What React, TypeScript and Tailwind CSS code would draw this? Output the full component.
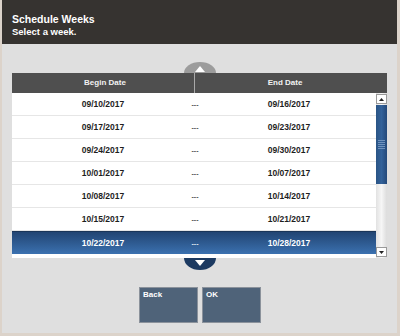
import React from 'react';

const weeks = [
  { begin: '09/10/2017', end: '09/16/2017' },
  { begin: '09/17/2017', end: '09/23/2017' },
  { begin: '09/24/2017', end: '09/30/2017' },
  { begin: '10/01/2017', end: '10/07/2017' },
  { begin: '10/08/2017', end: '10/14/2017' },
  { begin: '10/15/2017', end: '10/21/2017' },
  { begin: '10/22/2017', end: '10/28/2017' },
];

export default function App() {
  const selected = 6;

  return (
    <div
      className="w-[400px] h-[336px] flex flex-col bg-[#dfdfdf] border-l-2 border-r-[3px] border-b-[3px] border-[#dcd3ca] overflow-hidden"
      style={{ fontFamily: '"Liberation Sans", Arial, sans-serif' }}
    >
      {/* Header */}
      <div className="h-[44px] shrink-0 bg-[#363330] pl-[10px] pt-[14px] text-white font-bold leading-none">
        <div className="text-[10.5px]">Schedule Weeks</div>
        <div className="text-[9.5px] mt-[2px]">Select a week.</div>
      </div>

      {/* Table area */}
      <div className="flex flex-col items-center pt-[18px] pl-[10px] pr-[10px]">
        {/* Up tab */}
        <div className="w-[32px] h-[11px] rounded-t-[16px_11px] bg-[#9c9c9c] flex items-end justify-center pb-[1px]">
          <svg width="10" height="6" viewBox="0 0 10 6">
            <polygon points="5,0 10,6 0,6" fill="#ffffff" />
          </svg>
        </div>

        <div className="w-[375px] flex flex-col">
          {/* Column headers */}
          <div className="h-[20px] bg-[#4f4f4f] flex text-[#f2f2f2] font-bold text-[8px] leading-none">
            <div className="w-[182px] flex items-center justify-center pl-[4px]">Begin Date</div>
            <div className="w-px bg-[#a9a9a9]" />
            <div className="flex-1 flex items-center justify-center pr-[12px]">End Date</div>
          </div>

          {/* Body */}
          <div className="h-[165px] flex bg-white">
            <div className="w-[364px] flex flex-col">
              {weeks.map((w, i) => {
                const isSel = i === selected;
                return (
                  <div
                    key={w.begin}
                    className={`h-[23px] shrink-0 grid grid-cols-[170px_26px_168px] items-center font-bold text-[8.5px] leading-none ${
                      isSel
                        ? 'bg-gradient-to-b from-[#224573] to-[#3b71b0] text-white border-t border-[#1a3558]'
                        : 'text-[#1e1e1e] border-b border-[#e6e6e6]'
                    }`}
                  >
                    <div className="pl-[12px] text-center">{w.begin}</div>
                    <div className={`text-center text-[7px] ${isSel ? 'text-[#dfe6ef]' : 'text-[#555555]'}`}>---</div>
                    <div className="pr-[6px] text-center">{w.end}</div>
                  </div>
                );
              })}
            </div>

            {/* Scrollbar */}
            <div className="w-[11px] flex flex-col bg-gradient-to-r from-[#e2e2e2] via-[#f6f6f6] to-[#dcdcdc]">
              <div className="h-[10px] mt-[1px] bg-white border border-[#9a9a9a] flex items-center justify-center">
                <svg width="5" height="3" viewBox="0 0 5 3">
                  <polygon points="2.5,0 5,3 0,3" fill="#222" />
                </svg>
              </div>
              <div className="h-[79px] mt-[1px] bg-gradient-to-r from-[#2a5485] via-[#33629a] to-[#24497a] flex flex-col items-center justify-center gap-[1px]">
                {[0, 1, 2, 3, 4].map((g) => (
                  <div key={g} className="w-[7px] h-px bg-[#6f92bd]" />
                ))}
              </div>
              <div className="flex-1" />
              <div className="h-[10px] mb-[1px] bg-white border border-[#9a9a9a] flex items-center justify-center">
                <svg width="5" height="3" viewBox="0 0 5 3">
                  <polygon points="0,0 5,0 2.5,3" fill="#222" />
                </svg>
              </div>
            </div>
          </div>
        </div>

        {/* Down tab */}
        <div className="w-[32px] h-[12px] rounded-b-[16px_12px] bg-[#1c3a61] flex items-start justify-center pt-[2px]">
          <svg width="10" height="6" viewBox="0 0 10 6">
            <polygon points="0,0 10,0 5,6" fill="#ffffff" />
          </svg>
        </div>
      </div>

      {/* Buttons */}
      <div className="flex justify-center gap-[4px] mt-[17px] pl-[1px]">
        {['Back', 'OK'].map((label) => (
          <div
            key={label}
            className="w-[59px] h-[36px] bg-[#4f6379] border border-[#8b929b] text-white font-bold text-[8px] leading-none pl-[3px] pt-[3px]"
          >
            {label}
          </div>
        ))}
      </div>
    </div>
  );
}
